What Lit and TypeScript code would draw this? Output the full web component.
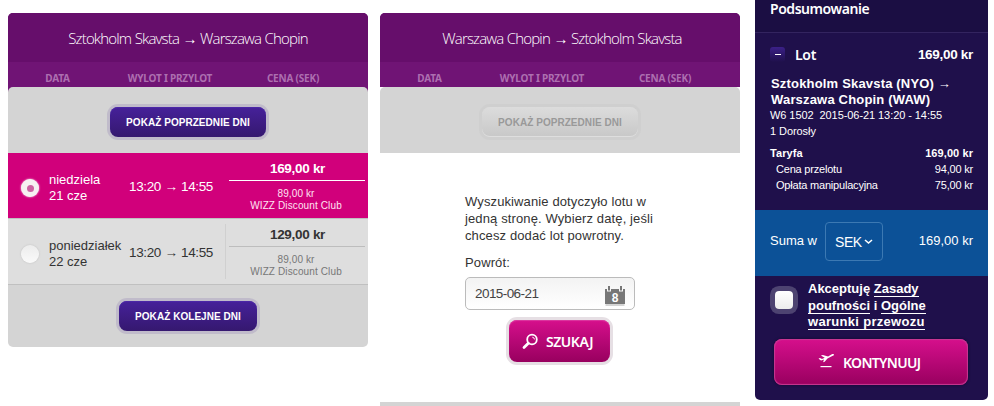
import { LitElement, html, css, svg, nothing } from 'lit';
import { customElement, property, state } from 'lit/decorators.js';
import { classMap } from 'lit/directives/class-map.js';

interface Flight {
  day: string;
  date: string;
  departs: string;
  arrives: string;
  price: string;
  clubPrice: string;
}

const FLIGHTS: Flight[] = [
  { day: 'niedziela', date: '21 cze', departs: '13:20', arrives: '14:55', price: '169,00 kr', clubPrice: '89,00 kr' },
  { day: 'poniedziałek', date: '22 cze', departs: '13:20', arrives: '14:55', price: '129,00 kr', clubPrice: '89,00 kr' },
];

const calendarIcon = svg`
  <svg width="22" height="21" viewBox="0 0 22 21">
    <path d="M1 4h2v2.500h4V4h8v2.500h4V4h2v15H1z" fill="#777" />
    <path d="M5 1v4.500M17 1v4.500" stroke="#777" stroke-width="2" />
    <path d="M1.500 20h19" stroke="#aaa" />
    <text x="11" y="17" text-anchor="middle" class="calendar-day">8</text>
  </svg>
`;

const searchIcon = svg`
  <svg width="17" height="17" viewBox="0 0 17 17" fill="none" stroke="#fff">
    <circle cx="10" cy="6.500" r="4.800" stroke-width="1.800" />
    <path d="M6.300 10.200L2 14.500" stroke-width="2.800" stroke-linecap="round" />
    <path d="M10.300 4.200q2 .2 2.200 2.200" stroke-width="1" />
  </svg>
`;

const planeIcon = svg`
  <svg width="17" height="15" viewBox="0 0 17 15" fill="#fff">
    <path d="M.5 5.500L2 5l2 .9 2.700-1.100L2.900 2.600 4.800 2l5.300 1.400L13.400 1.600c1.200-.6 2.200-.6 2.500-.2.200.6-.6 1.200-1.600 1.700L9.500 5.600 6.600 8.800l-1.500.4.9-2.700-2.200.8q-1 .3-1.600-.3z" />
    <path d="M2.500 13h11v1.200h-11z" />
  </svg>
`;

@customElement('day-button')
class DayButton extends LitElement {
  @property({ type: Boolean }) disabled = false;

  static styles = css`
    :host {
      display: block;
    }
    .button {
      display: block;
      height: 30px;
      padding: 0 16px;
      border: 0;
      border-radius: 8px;
      background: linear-gradient(#46219a, #35186f);
      box-shadow: 0 0 0 3px #c0bbca, inset 0 1px 1px #4c28a8;
      color: #fff;
      font: bold 10px/32px 'Liberation Sans', Arial, sans-serif;
      letter-spacing: 0.05px;
      white-space: nowrap;
    }
    .button:disabled {
      background: linear-gradient(#dcdcdc, #c8c8c8);
      box-shadow: 0 0 0 3px #cfcfcf, inset 0 -1px 0 #dedede;
      color: #999;
    }
  `;

  render() {
    return html`<button class="button" ?disabled=${this.disabled}><slot></slot></button>`;
  }
}

@customElement('timetable-header')
class TimetableHeader extends LitElement {
  @property() from = '';
  @property() to = '';

  static styles = css`
    :host {
      display: block;
      border-radius: 5px 5px 0 0;
      overflow: hidden;
      background: #701475;
    }
    .route {
      height: 49px;
      padding-left: var(--route-shift, 0);
      background: #660e6b;
      color: #fff;
      font: 300 15px/51px 'Open Sans', sans-serif;
      letter-spacing: -0.84px;
      word-spacing: 0.4px;
      text-align: center;
      white-space: nowrap;
    }
    .columns {
      display: grid;
      grid-template-columns: 99px 126px 1fr;
      height: 25px;
      color: #ad6fb0;
      font: bold 10px/33px 'Noto Sans', sans-serif;
      letter-spacing: -0.2px;
      text-align: center;
    }
    .price {
      padding-right: 15px;
    }
  `;

  render() {
    return html`
      <div class="route">${this.from} → ${this.to}</div>
      <div class="columns">
        <span>DATA</span>
        <span>WYLOT I PRZYLOT</span>
        <span class="price">CENA (SEK)</span>
      </div>
    `;
  }
}

@customElement('flight-row')
class FlightRow extends LitElement {
  @property({ attribute: false }) flight!: Flight;
  @property({ type: Boolean }) selected = false;

  static styles = css`
    :host {
      display: block;
    }
    .row {
      display: grid;
      grid-template-columns: 41px 76px 100px 1fr;
      align-items: center;
      box-sizing: border-box;
      height: 66px;
      border-bottom: 1px solid #c0c0c0;
      background: #dedede;
      color: #333;
      font: 13px/16px 'Liberation Sans', Arial, sans-serif;
    }
    .selected {
      background: #d1007b;
      color: #fff;
    }
    .radio {
      display: grid;
      place-items: center;
      box-sizing: border-box;
      width: 18px;
      height: 18px;
      margin: 5px 0 0 13px;
      border-radius: 50%;
      background: linear-gradient(#ececec, #fafafa);
      box-shadow: 0 0 2px #bbb;
    }
    .selected .radio {
      background: #f6f0f2;
      box-shadow: 0 0 2px #fff;
    }
    .dot {
      width: 7px;
      height: 7px;
      border-radius: 50%;
      background: #cc62a2;
    }
    .date {
      padding-top: 5px;
      white-space: nowrap;
    }
    .times {
      padding: 2px 0 0 4px;
      white-space: nowrap;
      font-size: 13.500px;
      letter-spacing: -0.35px;
    }
    .fares {
      display: flex;
      flex-direction: column;
      box-sizing: border-box;
      height: 55px;
      padding: 0 3px;
      border-left: 1px solid #d0d0d0;
      text-align: center;
    }
    .selected .fares {
      border-color: transparent;
    }
    .price {
      height: 22px;
      padding-left: 1px;
      border-bottom: 1px solid #bdbdbd;
      font-size: 13.500px;
      font-weight: bold;
      line-height: 21px;
      letter-spacing: -0.3px;
    }
    .selected .price {
      border-color: #fff;
    }
    .club {
      padding: 7px 2px 0 0;
      color: #777;
      font-size: 10px;
      line-height: 12px;
      letter-spacing: 0.12px;
    }
    .selected .club {
      color: #ffe3f2;
    }
  `;

  render() {
    const { day, date, departs, arrives, price, clubPrice } = this.flight;
    return html`
      <div class=${classMap({ row: true, selected: this.selected })}>
        <span class="radio">${this.selected ? html`<span class="dot"></span>` : nothing}</span>
        <div class="date">${day}<br />${date}</div>
        <div class="times">${departs} → ${arrives}</div>
        <div class="fares">
          <div class="price">${price}</div>
          <div class="club">${clubPrice}<br />WIZZ Discount Club</div>
        </div>
      </div>
    `;
  }
}

@customElement('return-search')
class ReturnSearch extends LitElement {
  static styles = css`
    :host {
      display: flex;
      flex-direction: column;
      padding: 40px 105px 0 85px;
      color: #333;
      font: 13px/17px 'Liberation Sans', Arial, sans-serif;
      letter-spacing: 0.12px;
    }
    .hint {
      height: 51px;
      margin-right: -20px;
      white-space: nowrap;
    }
    .label {
      padding: 10px 0 6px;
    }
    .field {
      display: flex;
      align-items: center;
      justify-content: space-between;
      box-sizing: border-box;
      height: 33px;
      padding: 0 8px 0 9px;
      border: 1px solid #bbb;
      border-radius: 5px;
      background: linear-gradient(#f3f3f3, #fff);
      color: #444;
      font-size: 13.500px;
      letter-spacing: -0.57px;
    }
    .icon {
      display: flex;
      padding-top: 3px;
    }
    .calendar-day {
      fill: #fff;
      font: bold 12px 'Liberation Sans', Arial, sans-serif;
      letter-spacing: 0;
    }
    .search {
      display: flex;
      align-items: center;
      gap: 7px;
      width: 101px;
      height: 42px;
      margin: 10px 0 0 44px;
      padding: 0 0 0 13px;
      border: 0;
      border-radius: 8px;
      background: linear-gradient(#d60f8c, #98005f);
      box-shadow: 0 0 0 3px #e6dfe4, inset 0 1px 1px #dc3aa0;
      color: #fff;
      font: 600 14px 'Noto Sans', sans-serif;
      letter-spacing: -0.45px;
    }
  `;

  render() {
    return html`
      <div class="hint">
        Wyszukiwanie dotyczyło lotu w<br />jedną stronę. Wybierz datę, jeśli<br />chcesz dodać lot powrotny.
      </div>
      <label class="label">Powrót:</label>
      <div class="field">
        <span>2015-06-21</span>
        <span class="icon">${calendarIcon}</span>
      </div>
      <button class="search">${searchIcon}<span>SZUKAJ</span></button>
    `;
  }
}

@customElement('booking-summary')
class BookingSummary extends LitElement {
  static styles = css`
    :host {
      display: block;
      box-sizing: border-box;
      width: 233px;
      height: 400px;
      border-radius: 0 0 5px 5px;
      background: #1f104b;
      color: #fff;
      font: 13px/16px 'Liberation Sans', Arial, sans-serif;
    }
    .title {
      height: 32px;
      padding-left: 15px;
      border-bottom: 1px solid #33245f;
      background: #1b0e43;
      font: 600 14px/18px 'Noto Sans', sans-serif;
      letter-spacing: -0.45px;
    }
    .line {
      display: flex;
      justify-content: space-between;
    }
    .details {
      box-sizing: border-box;
      height: 177px;
      padding: 13px 15px 0;
    }
    .heading {
      align-items: center;
      height: 17px;
      font-weight: bold;
    }
    .toggle {
      display: grid;
      place-items: center;
      width: 15px;
      height: 15px;
      border-radius: 3px;
      background: linear-gradient(#3b2088, #1f104b);
    }
    .minus {
      width: 6px;
      height: 1px;
      background: #fff;
    }
    .heading-text {
      flex: 1;
      padding-left: 10px;
      font: 600 14px/17px 'Noto Sans', sans-serif;
      letter-spacing: -0.3px;
    }
    .heading-price {
      font-size: 13.500px;
      letter-spacing: -0.3px;
    }
    .route {
      height: 32px;
      padding: 13px 0 0 1px;
      margin-bottom: -1px;
      font-weight: bold;
      letter-spacing: 0.18px;
      white-space: nowrap;
    }
    .small {
      font-size: 11px;
      letter-spacing: -0.07px;
      white-space: pre;
    }
    .fare {
      padding-top: 6px;
      font-weight: bold;
      letter-spacing: 0.08px;
    }
    .item {
      padding-left: 6px;
      letter-spacing: -0.2px;
    }
    .total {
      display: flex;
      align-items: center;
      box-sizing: border-box;
      height: 66px;
      padding: 0 15px 4px;
      background: #0c5197;
    }
    .currency {
      display: flex;
      align-items: center;
      gap: 2px;
      box-sizing: border-box;
      width: 58px;
      height: 39px;
      margin: 1px auto 0 8px;
      padding-left: 9px;
      border: 1px solid #3c79b3;
      border-radius: 4px;
      font-size: 14px;
      letter-spacing: -0.4px;
    }
    .terms {
      display: flex;
      box-sizing: border-box;
      height: 63px;
      padding: 5px 0 0 20px;
      font-weight: bold;
      line-height: 16.500px;
      white-space: nowrap;
    }
    .checkbox {
      width: 18px;
      height: 18px;
      margin: 10px 15px 0 0;
      border-radius: 4px;
      background: linear-gradient(#fff, #ececec);
      box-shadow: 0 0 0 5px #4d4371;
    }
    .link {
      border-bottom: 1px solid #fff;
    }
    .wide {
      letter-spacing: 0.3px;
    }
    .continue {
      display: flex;
      align-items: center;
      gap: 8px;
      width: 194px;
      height: 46px;
      margin-left: 19px;
      padding: 0 0 0 44px;
      border: 0;
      border-radius: 8px;
      background: linear-gradient(#d60f8c, #98005f);
      box-shadow: inset 0 0 1px 1px #c73a93, 0 0 3px #120830;
      color: #fff;
      font: 600 14px 'Noto Sans', sans-serif;
      letter-spacing: -0.7px;
    }
    .continue svg {
      margin-bottom: 3px;
    }
  `;

  render() {
    return html`
      <div class="title">Podsumowanie</div>
      <div class="details">
        <div class="line heading">
          <span class="toggle"><span class="minus"></span></span>
          <span class="heading-text">Lot</span>
          <span class="heading-price">169,00 kr</span>
        </div>
        <div class="route">Sztokholm Skavsta (NYO) →<br />Warszawa Chopin (WAW)</div>
        <div class="small">W6 1502  2015-06-21 13:20 - 14:55</div>
        <div class="small">1 Dorosły</div>
        <div class="line small fare"><span>Taryfa</span><span>169,00 kr</span></div>
        <div class="line small item"><span>Cena przelotu</span><span>94,00 kr</span></div>
        <div class="line small item"><span>Opłata manipulacyjna</span><span>75,00 kr</span></div>
      </div>
      <div class="total">
        <span>Suma w</span>
        <span class="currency">
          SEK
          <svg width="9" height="7" viewBox="0 0 9 7" fill="none" stroke="#fff" stroke-width="1.600">
            <path d="M1 2l3.500 3L8 2" />
          </svg>
        </span>
        <span>169,00 kr</span>
      </div>
      <div class="terms">
        <span class="checkbox"></span>
        <span>
          Akceptuję <span class="link">Zasady</span><br />
          <span class="link">poufności</span> i <span class="link">Ogólne</span><br />
          <span class="link wide">warunki przewozu</span>
        </span>
      </div>
      <button class="continue">${planeIcon}<span>KONTYNUUJ</span></button>
    `;
  }
}

@customElement('app-root')
class AppRoot extends LitElement {
  @state() selected = 0;

  static styles = css`
    :host {
      display: flex;
      align-items: flex-start;
      box-sizing: border-box;
      height: 406px;
      padding-left: 8px;
      background: #fff;
      overflow: hidden;
    }
    .timetable {
      width: 360px;
      margin: 13px 12px 0 0;
    }
    .body {
      background: #701475;
    }
    .bar {
      display: flex;
      justify-content: center;
      box-sizing: border-box;
      height: 66px;
      padding-top: 20px;
      border-radius: 5px 5px 0 0;
      background: #d4d4d4;
    }
    .later {
      height: 62px;
      padding-top: 16px;
      border-radius: 0 0 5px 5px;
    }
    .inbound {
      --route-shift: 4px;
      display: flex;
      flex-direction: column;
      height: 393px;
      margin-right: 15px;
    }
    .rest {
      flex: none;
      height: 4px;
      margin-top: auto;
      background: #d4d4d4;
    }
  `;

  render() {
    return html`
      <section class="timetable">
        <timetable-header from="Sztokholm Skavsta" to="Warszawa Chopin"></timetable-header>
        <div class="body">
          <div class="bar"><day-button>POKAŻ POPRZEDNIE DNI</day-button></div>
        </div>
        ${FLIGHTS.map(
          (flight, i) => html`
            <flight-row
              .flight=${flight}
              ?selected=${i === this.selected}
              @click=${() => (this.selected = i)}
            ></flight-row>
          `,
        )}
        <div class="bar later"><day-button>POKAŻ KOLEJNE DNI</day-button></div>
      </section>
      <section class="timetable inbound">
        <timetable-header from="Warszawa Chopin" to="Sztokholm Skavsta"></timetable-header>
        <div class="bar"><day-button disabled>POKAŻ POPRZEDNIE DNI</day-button></div>
        <return-search></return-search>
        <div class="rest"></div>
      </section>
      <booking-summary></booking-summary>
    `;
  }
}
